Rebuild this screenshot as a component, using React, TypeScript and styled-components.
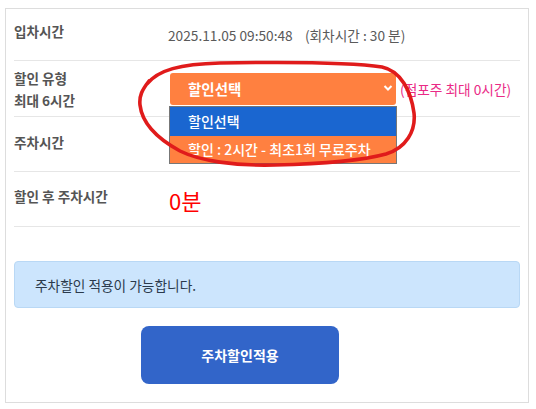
import React from "react";
import styled, { createGlobalStyle } from "styled-components";

const Global = createGlobalStyle`
  html, body { margin: 0; padding: 0; background: #ffffff; }
  body { font-family: "Noto Sans CJK KR", "Noto Sans", sans-serif; }
  * { box-sizing: border-box; }
`;

const Page = styled.div`
  position: relative;
  width: 536px;
  height: 409px;
  padding: 8px 0 0 5px;
`;

const Card = styled.div`
  width: 524px;
  height: 395px;
  border: 1px solid #dddddd;
  padding: 0 8px 0 8px;
  display: flex;
  flex-direction: column;
`;

const Row = styled.div<{ $h: number }>`
  display: flex;
  align-items: center;
  height: ${(p) => p.$h}px;
  border-bottom: 1px solid #e6e6e6;
`;

const Label = styled.div<{ $lift: number }>`
  width: 154px;
  flex: none;
  font-size: 13.6px;
  font-weight: 700;
  line-height: 22px;
  color: #555555;
  padding-bottom: ${(p) => p.$lift}px;
`;

const Value = styled.div`
  font-size: 13.7px;
  color: #5a5a5a;
  line-height: 20px;
  white-space: pre;
`;

const SelectWrap = styled.div`
  position: relative;
  display: flex;
  align-items: center;
  gap: 4px;
`;

const Select = styled.div`
  position: relative;
  width: 226px;
  height: 32px;
  margin-left: 2px;
  background: #ff8040;
  border-radius: 3px;
  display: flex;
  align-items: center;
  padding-left: 18px;
  font-size: 14.5px;
  font-weight: 700;
  color: #ffffff;
`;

const Chevron = styled.svg`
  position: absolute;
  right: 3px;
  top: 11px;
`;

const Menu = styled.div`
  position: absolute;
  left: -1px;
  top: 33px;
  width: 228px;
  border: 1px solid #777777;
  display: flex;
  flex-direction: column;
  z-index: 2;
`;

const Option = styled.div<{ $active?: boolean }>`
  height: ${(p) => (p.$active ? 29 : 27)}px;
  background: ${(p) => (p.$active ? "#1a66d0" : "#ff8040")};
  color: #ffffff;
  font-size: 14px;
  font-weight: 500;
  display: flex;
  align-items: center;
  padding-left: 18px;
  white-space: pre;
`;

const Note = styled.span`
  font-size: 13.7px;
  color: #ea2a86;
`;

const Big = styled.div`
  font-size: 22px;
  color: #ff0000;
  line-height: 28px;
  padding-left: 1px;
  padding-top: 1px;
`;

const Alert = styled.div`
  margin-top: 34px;
  height: 47px;
  background: #cce5fd;
  border: 1px solid #b9d8f5;
  border-radius: 4px;
  display: flex;
  align-items: center;
  padding-left: 20px;
  font-size: 13.7px;
  color: #2b3a4c;
`;

const Button = styled.button`
  margin: 18px 0 0 127px;
  width: 198px;
  height: 58px;
  border: none;
  border-radius: 8px;
  background: #3265c9;
  color: #ffffff;
  font-family: "Noto Sans CJK KR", "Noto Sans", sans-serif;
  font-size: 14px;
  font-weight: 700;
`;

const Annotation = styled.svg`
  position: absolute;
  left: 0;
  top: 0;
  pointer-events: none;
  z-index: 5;
`;

export default function App() {
  return (
    <>
      <Global />
      <Page>
        <Card>
          <Row $h={52}>
            <Label $lift={8}>입차시간</Label>
            <Value>{"2025.11.05 09:50:48    (회차시간 : 30 분)"}</Value>
          </Row>
          <Row $h={56}>
            <Label $lift={0}>
              할인 유형
              <br />
              최대 6시간
            </Label>
            <SelectWrap>
              <Select>
                할인선택
                <Chevron width="10" height="8" viewBox="0 0 10 8">
                  <path d="M1.5 2 L5 5.5 L8.5 2" fill="none" stroke="#ffffff" strokeWidth="2" />
                </Chevron>
                <Menu>
                  <Option $active>할인선택</Option>
                  <Option>{"할인 : 2시간 - 최초1회 무료주차"}</Option>
                </Menu>
              </Select>
              <Note>(점포주 최대 0시간)</Note>
            </SelectWrap>
          </Row>
          <Row $h={55}>
            <Label $lift={5}>주차시간</Label>
          </Row>
          <Row $h={55}>
            <Label $lift={7}>할인 후 주차시간</Label>
            <Big>0분</Big>
          </Row>
          <Alert>주차할인 적용이 가능합니다.</Alert>
          <Button>주차할인적용</Button>
        </Card>
        <Annotation width="536" height="409" viewBox="0 0 536 409">
          <path
            d="M 147 84 C 158 70, 180 64, 220 63 C 280 62, 350 62, 382 67 C 401 71, 411 91, 414 113 C 416 131, 406 148, 386 154 C 360 161, 320 164, 275 165 C 235 166, 200 161, 180 151 C 158 139, 142 123, 140 105 C 139 96, 142 90, 149 81"
            fill="none"
            stroke="#e01b1b"
            strokeWidth="3.6"
            strokeLinecap="round"
          />
        </Annotation>
      </Page>
    </>
  );
}
